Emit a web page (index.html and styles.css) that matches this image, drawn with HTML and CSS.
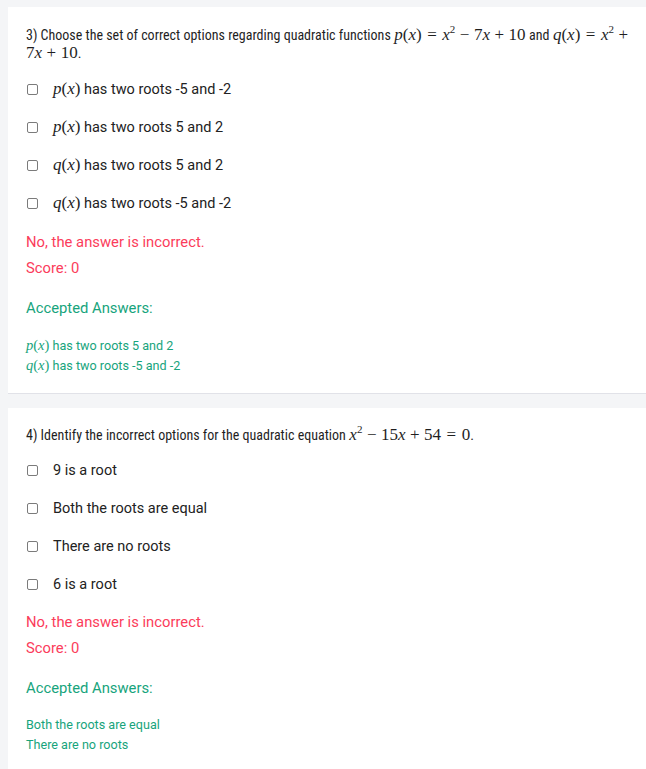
FILE: index.html
```html
<!DOCTYPE html>
<html>
<head>
<meta charset="utf-8">
<link rel="stylesheet" href="styles.css">
</head>
<body>
<div class="page">
  <section class="card">
    <div class="question q3"><span class="qt">3) Choose the set of correct options regarding quadratic functions</span> <span class="m"><i>p</i>(<i>x</i>)<span class="rel">=</span><i>x</i><sup>2</sup><span class="bin">−</span>7<i>x</i><span class="bin">+</span>10</span> <span class="qt">and</span> <span class="m"><i>q</i>(<i>x</i>)<span class="rel">=</span><i>x</i><sup>2</sup><span class="bin">+</span></span><br><span class="m">7<i>x</i><span class="bin">+</span>10</span><span class="qt">.</span></div>
    <ul class="options">
      <li class="option"><span class="box"></span><span class="label"><span class="m big"><i>p</i>(<i>x</i>)</span> has two roots -5 and -2</span></li>
      <li class="option"><span class="box"></span><span class="label"><span class="m big"><i>p</i>(<i>x</i>)</span> has two roots 5 and 2</span></li>
      <li class="option"><span class="box"></span><span class="label"><span class="m big"><i>q</i>(<i>x</i>)</span> has two roots 5 and 2</span></li>
      <li class="option"><span class="box"></span><span class="label"><span class="m big"><i>q</i>(<i>x</i>)</span> has two roots -5 and -2</span></li>
    </ul>
    <p class="wrong">No, the answer is incorrect.</p>
    <p class="score">Score: 0</p>
    <p class="accepted">Accepted Answers:</p>
    <div class="answers">
      <div><span class="m"><i>p</i>(<i>x</i>)</span> has two roots 5 and 2</div>
      <div><span class="m"><i>q</i>(<i>x</i>)</span> has two roots -5 and -2</div>
    </div>
  </section>
  <section class="card">
    <div class="question"><span class="qt">4) Identify the incorrect options for the quadratic equation</span> <span class="m"><i>x</i><sup>2</sup><span class="bin">−</span>15<i>x</i><span class="bin">+</span>54<span class="rel">=</span>0</span><span class="qt">.</span></div>
    <ul class="options">
      <li class="option"><span class="box"></span><span class="label">9 is a root</span></li>
      <li class="option"><span class="box"></span><span class="label">Both the roots are equal</span></li>
      <li class="option"><span class="box"></span><span class="label">There are no roots</span></li>
      <li class="option"><span class="box"></span><span class="label">6 is a root</span></li>
    </ul>
    <p class="wrong">No, the answer is incorrect.</p>
    <p class="score">Score: 0</p>
    <p class="accepted">Accepted Answers:</p>
    <div class="answers">
      <div>Both the roots are equal</div>
      <div>There are no roots</div>
    </div>
  </section>
</div>
</body>
</html>
```
FILE: styles.css
```css
html, body {
  margin: 0;
  padding: 0;
  background: #f4f5f7;
  font-family: Roboto, "Liberation Sans", sans-serif;
  color: #2b2b2b;
}
.page {
  padding: 7px 0 0 8px;
}
.card {
  background: #fff;
  border-bottom: 1px solid #e1e2e8;
  padding: 19px 0 17px 18px;
  margin-bottom: 14px;
}
.card + .card {
  padding-top: 18px;
}
.question {
  font-size: 14px;
  line-height: 18px;
  color: #1f1f1f;
}
.qt {
  font-stretch: 78%;
}
.m {
  font-family: "Liberation Serif", "DejaVu Serif", serif;
  font-size: 17px;
  line-height: 0;
  white-space: nowrap;
}
.m sup {
  font-size: 11px;
  vertical-align: 7px;
  line-height: 0;
}
.rel {
  margin: 0 5.5px;
}
.bin {
  margin: 0 4.5px;
}
.options {
  list-style: none;
  margin: 8px 0 0 0;
  padding: 0;
}
.option {
  height: 38px;
  display: flex;
  align-items: center;
}
.card + .card .options {
  margin-top: 7px;
}
.box {
  width: 9px;
  height: 9px;
  border: 1px solid #7b7b7b;
  border-radius: 2px;
  margin-left: 1px;
  margin-right: 15px;
  flex: none;
}
.label {
  font-size: 14.5px;
  color: #222;
}
.label .m.big {
  font-size: 17px;
}
.wrong, .score {
  margin: 0;
  font-size: 14.8px;
  line-height: 26px;
  color: #fb3c5b;
}
.wrong {
  margin-top: 7px;
}
.card + .card .wrong {
  margin-top: 6px;
}
.accepted {
  margin: 17px 0 0 0;
  font-size: 14.8px;
  line-height: 20px;
  color: #17a47c;
}
.answers {
  margin-top: 18px;
  font-size: 12.6px;
  line-height: 20px;
  color: #17a47c;
}
.card + .card .answers {
  margin-top: 17px;
}
.answers div {
  height: 20px;
}
.answers .m {
  font-size: 14.5px;
}
```
